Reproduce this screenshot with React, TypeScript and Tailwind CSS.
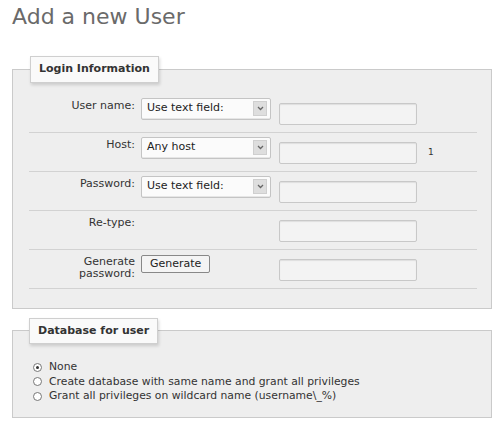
import React from 'react';

const font = { fontFamily: '"DejaVu Sans", Verdana, sans-serif' };

function FakeSelect({ value }: { value: string }) {
  return (
    <div className="flex h-[22px] w-[130px] items-center justify-between rounded-[2px] border border-[#c4c4c4] bg-[#fbfbfb] pl-[5px] pr-[3px] text-[11px] text-[#222] shadow-[inset_0_-1px_0_#e6e6e6]">
      <span>{value}</span>
      <span className="flex h-[15px] w-[14px] items-center justify-center border border-[#cfcfcf] bg-[#dedede]">
        <svg width="7" height="5" viewBox="0 0 7 5">
          <path d="M1 1l2.5 2.5L6 1" fill="none" stroke="#666" strokeWidth="1.3" />
        </svg>
      </span>
    </div>
  );
}

function TextBox() {
  return (
    <div className="h-[22px] w-[138px] rounded-[2px] border border-[#c8c8c8] bg-[#f3f3f3] shadow-[inset_0_1px_1px_#dedede]" />
  );
}

function Row({
  label,
  control,
  extra,
}: {
  label: React.ReactNode;
  control?: React.ReactNode;
  extra?: React.ReactNode;
}) {
  return (
    <div className="flex h-[39px] items-start border-b border-[#d2d2d2] pt-[4px]">
      <div className="w-[112px] pr-[6px] pt-[2px] text-right text-[11px] leading-[12px] text-[#333]">{label}</div>
      <div className="w-[138px]">{control}</div>
      <div className="pt-[5px]">
        <TextBox />
      </div>
      <div className="pl-[11px] pt-[9px] text-[9px] text-[#333]">{extra}</div>
    </div>
  );
}

function Legend({ children, className }: { children: React.ReactNode; className: string }) {
  return (
    <legend
      className={`${className} border border-[#cfcfcf] bg-[#fafafa] px-[8px] py-[4px] text-[11px] font-bold text-[#333] shadow-[1px_2px_3px_rgba(0,0,0,0.15)]`}
    >
      {children}
    </legend>
  );
}

function Radio({ checked, label }: { checked?: boolean; label: string }) {
  return (
    <div className="flex h-[14.5px] items-center text-[10.8px] text-[#333]">
      <span className="mr-[7px] flex h-[9px] w-[9px] items-center justify-center rounded-full border border-[#777] bg-white">
        {checked && <span className="h-[3px] w-[3px] rounded-full bg-[#333]" />}
      </span>
      {label}
    </div>
  );
}

export default function App() {
  return (
    <div className="h-[424px] w-[500px] bg-white" style={font}>
      <h1 className="pl-[12px] pt-[4px] text-[22px] leading-[26px] font-normal text-[#6a6a6a]">Add a new User</h1>
      <fieldset className="ml-[12px] mt-[26px] w-[480px] border border-[#cacaca] bg-[#eeeeee] pb-[19px] pl-[16px] pr-[14px]">
        <Legend className="ml-[1px]">Login Information</Legend>
        <div className="mt-[11px]">
          <Row label="User name:" control={<FakeSelect value="Use text field:" />} />
          <Row label="Host:" control={<FakeSelect value="Any host" />} extra="1" />
          <Row label="Password:" control={<FakeSelect value="Use text field:" />} />
          <Row label="Re-type:" />
          <Row
            label={
              <>
                Generate
                <br />
                password:
              </>
            }
            control={
              <button className="mt-[1px] block h-[18px] rounded-[2px] border border-[#888] bg-[#f4f4f4] px-[8px] text-[11px] leading-[14px] text-[#222]">
                Generate
              </button>
            }
          />
        </div>
      </fieldset>
      <fieldset className="ml-[12px] mt-[9px] h-[100px] w-[480px] border border-[#cacaca] bg-[#eeeeee] pl-[20px]">
        <Legend className="-ml-[4px]">Database for user</Legend>
        <div className="mt-[16px]">
          <Radio checked label="None" />
          <Radio label="Create database with same name and grant all privileges" />
          <Radio label="Grant all privileges on wildcard name (username\_%)" />
        </div>
      </fieldset>
    </div>
  );
}
